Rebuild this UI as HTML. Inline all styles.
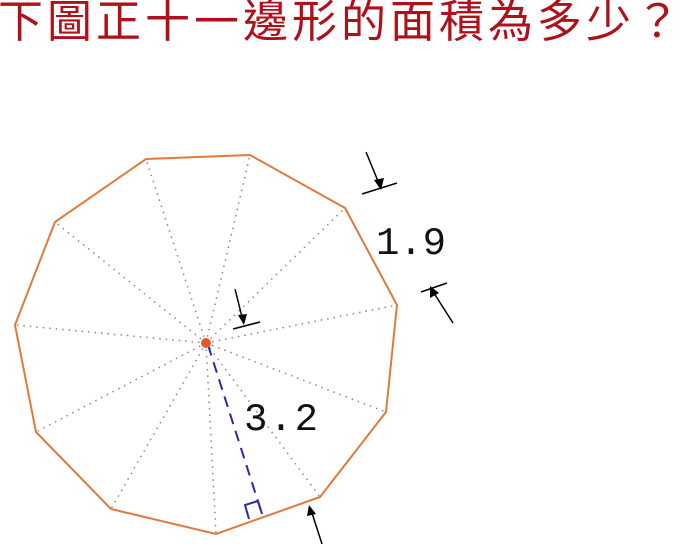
<!DOCTYPE html>
<html><head><meta charset="utf-8"><style>
body{margin:0;width:689px;height:544px;background:#fff;overflow:hidden;position:relative}
.t{position:absolute;left:-2px;top:-4px;font-family:"Liberation Sans","Noto Sans CJK TC",sans-serif;font-size:45px;color:#b0101a;letter-spacing:4px;white-space:nowrap;line-height:52px}
svg{position:absolute;left:0;top:0}
</style></head><body>
<div class="t">下圖正十一邊形的面積為多少？</div>
<svg width="689" height="544">
<g stroke="#888" stroke-width="1.5" stroke-dasharray="1.5 5" fill="none">
<line x1="206" y1="343" x2="146" y2="159"/><line x1="206" y1="343" x2="250" y2="155"/>
<line x1="206" y1="343" x2="345" y2="208"/><line x1="206" y1="343" x2="397" y2="305"/>
<line x1="206" y1="343" x2="386" y2="412"/><line x1="206" y1="343" x2="320" y2="497"/>
<line x1="206" y1="343" x2="216" y2="534"/><line x1="206" y1="343" x2="111" y2="509"/>
<line x1="206" y1="343" x2="36" y2="432"/><line x1="206" y1="343" x2="15" y2="325"/>
<line x1="206" y1="343" x2="55" y2="222"/>
</g>
<polygon points="146,159 250,155 345,208 397,305 386,412 320,497 216,534 111,509 36,432 15,325 55,222" fill="none" stroke="#e07a3c" stroke-width="2"/>
<line x1="208" y1="345" x2="262" y2="514" stroke="#2a2aa8" stroke-width="2" stroke-dasharray="11 7"/>
<polyline points="249,519 245,505 258,501 262,514" fill="none" stroke="#2a2aa8" stroke-width="2"/>
<circle cx="206" cy="343" r="5" fill="#e8582a"/>
<g stroke="#000" stroke-width="1.5" fill="#000">
<line x1="366" y1="152" x2="380" y2="186"/><polygon points="381,190 374,180 384,178" stroke="none"/>
<line x1="362" y1="194" x2="397" y2="183"/>
<line x1="453" y1="323" x2="432" y2="290"/><polygon points="430,286 439,293 430,298" stroke="none"/>
<line x1="421" y1="292" x2="447" y2="283"/>
<line x1="235" y1="289" x2="243" y2="321"/><polygon points="244,325 238,315 247,314" stroke="none"/>
<line x1="233" y1="329" x2="260" y2="322"/>
<line x1="322" y1="544" x2="311" y2="510"/><polygon points="309,505 316,514 307,516" stroke="none"/>
</g>
<text x="376" y="254" font-family="Liberation Mono,monospace" font-size="39" fill="#111" textLength="70">1.9</text>
<text x="244" y="430" font-family="Liberation Mono,monospace" font-size="39" fill="#111" textLength="74">3.2</text>
</svg>
</body></html>
